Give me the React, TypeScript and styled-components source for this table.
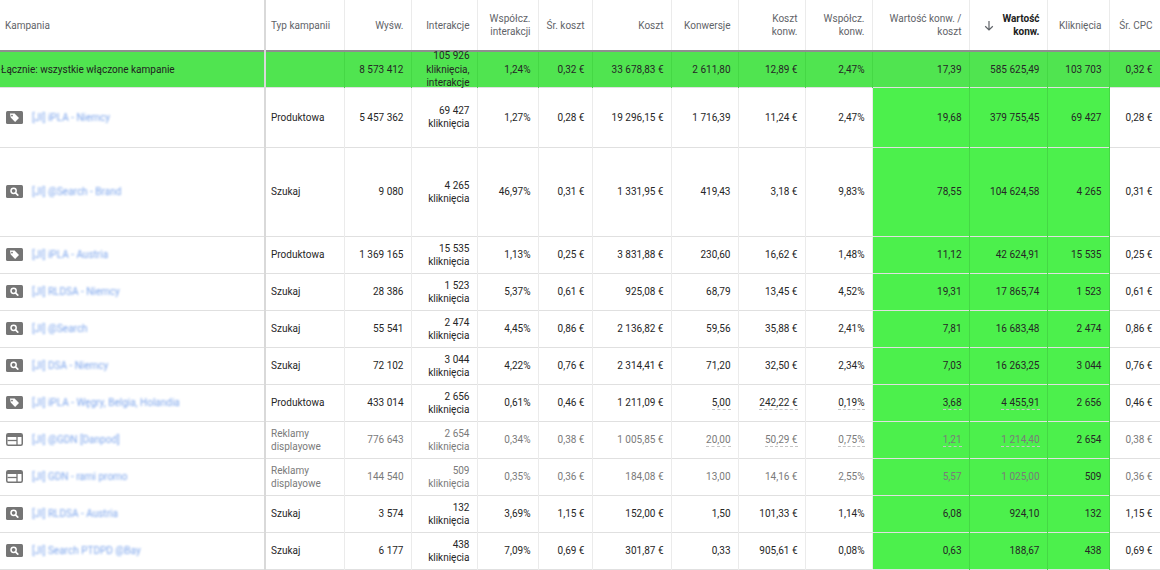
import React from "react";
import styled, { createGlobalStyle, css } from "styled-components";

const GlobalStyle = createGlobalStyle`
  html, body {
    margin: 0;
    padding: 0;
    background: #ffffff;
  }
  body {
    font-family: Roboto, "Noto Sans", Arial, sans-serif;
    font-size: 10px;
    color: #262626;
  }
`;

const GREEN = "#4cf04c";
const TOTAL_GREEN = "#50e450";

const Table = styled.table`
  width: 1160px;
  border-collapse: collapse;
  table-layout: fixed;
`;

const HeadCell = styled.th<{ $left?: boolean; $sorted?: boolean }>`
  height: 50px;
  padding: 0 7px 0 5px;
  text-align: ${(p) => (p.$left ? "left" : "right")};
  vertical-align: middle;
  white-space: nowrap;
  font-weight: ${(p) => (p.$sorted ? 700 : 400)};
  color: ${(p) => (p.$sorted ? "#212121" : "#5f6368")};
  line-height: 13px;
  border-right: 1px solid #ebebeb;
  border-bottom: 1px solid #9e9e9e;
  &:first-child {
    padding-left: 5px;
    border-right: 2px solid #d9d9d9;
  }
`;

const SortWrap = styled.div`
  display: flex;
  align-items: center;
  justify-content: space-between;
  padding-left: 9px;
`;

const Row = styled.tr<{ $h: number; $total?: boolean; $dim?: boolean }>`
  height: ${(p) => p.$h}px;
  color: ${(p) => (p.$dim ? "#7a7a7a" : "#262626")};
  border-bottom: 1px solid #e0e0e0;
  ${(p) =>
    p.$total &&
    css`
      background: ${TOTAL_GREEN};
      border-top: 2px solid #8f8f8f;
    `}
`;

const Cell = styled.td<{ $left?: boolean; $green?: boolean; $total?: boolean; $dark?: boolean }>`
  padding: 0 7px 0 5px;
  text-align: ${(p) => (p.$left ? "left" : "right")};
  vertical-align: middle;
  line-height: 13px;
  color: ${(p) => (p.$dark ? "#262626" : "inherit")};
  border-right: 1px solid ${(p) => (p.$green || p.$total ? "#45d845" : "#ebebeb")};
  background: ${(p) => (p.$green ? GREEN : "transparent")};
  &:first-child {
    padding-left: 6px;
    border-right: 2px solid #d9d9d9;
  }
`;

const Squeezed = styled.div`
  margin: -3px 0;
  line-height: 13.5px;
`;

const TotalLabel = styled.span`
  margin-left: -5px;
  color: #212121;
`;

const NameWrap = styled.div`
  display: flex;
  align-items: center;
  gap: 9px;
`;

const CampaignName = styled.span`
  color: #7ea6ec;
  filter: blur(1px);
  white-space: nowrap;
  overflow: hidden;
`;

const Dotted = styled.span`
  border-bottom: 1px dashed #c4c4c4;
  padding-bottom: 1px;
`;

const SortArrow = () => (
  <svg width="10" height="11" viewBox="0 0 10 11">
    <path d="M5 1v9M1.2 6.3 5 10l3.8-3.7" fill="none" stroke="#5f6368" strokeWidth="1.2" />
  </svg>
);

type IconKind = "tag" | "search" | "display";

const CampaignIcon = ({ kind }: { kind: IconKind }) => {
  if (kind === "display") {
    return (
      <svg width="17" height="13" viewBox="0 0 17 13">
        <rect x="0.75" y="0.75" width="15.5" height="11.5" rx="1.5" fill="#fff" stroke="#757575" strokeWidth="1.5" />
        <rect x="1" y="1" width="15" height="3" fill="#757575" />
        <line x1="1.5" y1="7.5" x2="11" y2="7.5" stroke="#757575" strokeWidth="1.3" />
        <line x1="11" y1="4" x2="11" y2="12" stroke="#757575" strokeWidth="1.3" />
      </svg>
    );
  }
  if (kind === "search") {
    return (
      <svg width="17" height="13" viewBox="0 0 17 13">
        <rect x="0" y="0" width="17" height="13" rx="1.5" fill="#757575" />
        <circle cx="7.6" cy="5.8" r="2.6" fill="none" stroke="#fff" strokeWidth="1.5" />
        <line x1="9.5" y1="7.8" x2="11.8" y2="10.1" stroke="#fff" strokeWidth="1.7" strokeLinecap="round" />
      </svg>
    );
  }
  return (
    <svg width="17" height="13" viewBox="0 0 17 13">
      <rect x="0" y="0" width="17" height="13" rx="1.5" fill="#757575" />
      <path d="M4 2.6h4.6l4.4 4.4-3.9 3.9L4.7 6.5z" fill="#fff" />
      <circle cx="6" cy="4.6" r="0.9" fill="#757575" />
    </svg>
  );
};

type Campaign = {
  icon: IconKind;
  name: string;
  typ: string;
  h: number;
  dim?: boolean;
  dotted?: number[];
  values: string[];
  clicks: string;
};

// values: wysw, wspInt, srKoszt, koszt, konw, kosztKonw, wspKonw, wartKoszt, wart, klik, cpc
const campaigns: Campaign[] = [
  { icon: "tag", name: "[JI] iPLA - Niemcy", typ: "Produktowa", h: 60, clicks: "69 427",
    values: ["5 457 362", "1,27%", "0,28 €", "19 296,15 €", "1 716,39", "11,24 €", "2,47%", "19,68", "379 755,45", "69 427", "0,28 €"] },
  { icon: "search", name: "[JI] @Search - Brand", typ: "Szukaj", h: 89, clicks: "4 265",
    values: ["9 080", "46,97%", "0,31 €", "1 331,95 €", "419,43", "3,18 €", "9,83%", "78,55", "104 624,58", "4 265", "0,31 €"] },
  { icon: "tag", name: "[JI] iPLA - Austria", typ: "Produktowa", h: 37, clicks: "15 535",
    values: ["1 369 165", "1,13%", "0,25 €", "3 831,88 €", "230,60", "16,62 €", "1,48%", "11,12", "42 624,91", "15 535", "0,25 €"] },
  { icon: "search", name: "[JI] RLDSA - Niemcy", typ: "Szukaj", h: 37, clicks: "1 523",
    values: ["28 386", "5,37%", "0,61 €", "925,08 €", "68,79", "13,45 €", "4,52%", "19,31", "17 865,74", "1 523", "0,61 €"] },
  { icon: "search", name: "[JI] @Search", typ: "Szukaj", h: 37, clicks: "2 474",
    values: ["55 541", "4,45%", "0,86 €", "2 136,82 €", "59,56", "35,88 €", "2,41%", "7,81", "16 683,48", "2 474", "0,86 €"] },
  { icon: "search", name: "[JI] DSA - Niemcy", typ: "Szukaj", h: 37, clicks: "3 044",
    values: ["72 102", "4,22%", "0,76 €", "2 314,41 €", "71,20", "32,50 €", "2,34%", "7,03", "16 263,25", "3 044", "0,76 €"] },
  { icon: "tag", name: "[JI] iPLA - Węgry, Belgia, Holandia", typ: "Produktowa", h: 37, clicks: "2 656", dotted: [4, 5, 6, 7, 8],
    values: ["433 014", "0,61%", "0,46 €", "1 211,09 €", "5,00", "242,22 €", "0,19%", "3,68", "4 455,91", "2 656", "0,46 €"] },
  { icon: "display", name: "[JI] @GDN [Danpod]", typ: "Reklamy displayowe", h: 37, dim: true, clicks: "2 654", dotted: [4, 5, 6, 7, 8],
    values: ["776 643", "0,34%", "0,38 €", "1 005,85 €", "20,00", "50,29 €", "0,75%", "1,21", "1 214,40", "2 654", "0,38 €"] },
  { icon: "display", name: "[JI] GDN - rami promo", typ: "Reklamy displayowe", h: 37, dim: true, clicks: "509",
    values: ["144 540", "0,35%", "0,36 €", "184,08 €", "13,00", "14,16 €", "2,55%", "5,57", "1 025,00", "509", "0,36 €"] },
  { icon: "search", name: "[JI] RLDSA - Austria", typ: "Szukaj", h: 37, clicks: "132",
    values: ["3 574", "3,69%", "1,15 €", "152,00 €", "1,50", "101,33 €", "1,14%", "6,08", "924,10", "132", "1,15 €"] },
  { icon: "search", name: "[JI] Search PTDPD @Bay", typ: "Szukaj", h: 37, clicks: "438",
    values: ["6 177", "7,09%", "0,69 €", "301,87 €", "0,33", "905,61 €", "0,08%", "0,63", "188,67", "438", "0,69 €"] },
];

const widths = [265, 79, 67, 66, 61, 54, 79, 67, 67, 67, 97, 78, 62, 51];

const totals = ["8 573 412", "1,24%", "0,32 €", "33 678,83 €", "2 611,80", "12,89 €", "2,47%", "17,39", "585 625,49", "103 703", "0,32 €"];

const App = () => {
  return (
    <>
      <GlobalStyle />
      <Table>
        <colgroup>
          {widths.map((w, i) => (
            <col key={i} style={{ width: w }} />
          ))}
        </colgroup>
        <thead>
          <tr>
            <HeadCell $left>Kampania</HeadCell>
            <HeadCell $left>Typ kampanii</HeadCell>
            <HeadCell>Wyśw.</HeadCell>
            <HeadCell>Interakcje</HeadCell>
            <HeadCell>
              Współcz.
              <br />
              interakcji
            </HeadCell>
            <HeadCell>Śr. koszt</HeadCell>
            <HeadCell>Koszt</HeadCell>
            <HeadCell>Konwersje</HeadCell>
            <HeadCell>
              Koszt
              <br />
              konw.
            </HeadCell>
            <HeadCell>
              Współcz.
              <br />
              konw.
            </HeadCell>
            <HeadCell>
              Wartość konw. /
              <br />
              koszt
            </HeadCell>
            <HeadCell $sorted>
              <SortWrap>
                <SortArrow />
                <span>
                  Wartość
                  <br />
                  konw.
                </span>
              </SortWrap>
            </HeadCell>
            <HeadCell>Kliknięcia</HeadCell>
            <HeadCell>Śr. CPC</HeadCell>
          </tr>
        </thead>
        <tbody>
          <Row $h={36} $total>
            <Cell $left $total>
              <TotalLabel>Łącznie: wszystkie włączone kampanie</TotalLabel>
            </Cell>
            <Cell $left $total />
            <Cell $total>{totals[0]}</Cell>
            <Cell $total>
              <Squeezed>
                105 926
                <br />
                kliknięcia,
                <br />
                interakcje
              </Squeezed>
            </Cell>
            {totals.slice(1).map((v, i) => (
              <Cell key={i} $total>
                {v}
              </Cell>
            ))}
          </Row>
          {campaigns.map((c) => (
            <Row key={c.name} $h={c.h} $dim={c.dim}>
              <Cell $left>
                <NameWrap>
                  <CampaignIcon kind={c.icon} />
                  <CampaignName>{c.name}</CampaignName>
                </NameWrap>
              </Cell>
              <Cell $left>{c.typ}</Cell>
              <Cell>{c.values[0]}</Cell>
              <Cell>
                {c.clicks}
                <br />
                kliknięcia
              </Cell>
              {c.values.slice(1).map((v, i) => {
                const idx = i + 1;
                const green = idx >= 7 && idx <= 9;
                return (
                  <Cell key={idx} $green={green} $dark={idx === 9}>
                    {c.dotted?.includes(idx) ? <Dotted>{v}</Dotted> : v}
                  </Cell>
                );
              })}
            </Row>
          ))}
        </tbody>
      </Table>
    </>
  );
};

export default App;
